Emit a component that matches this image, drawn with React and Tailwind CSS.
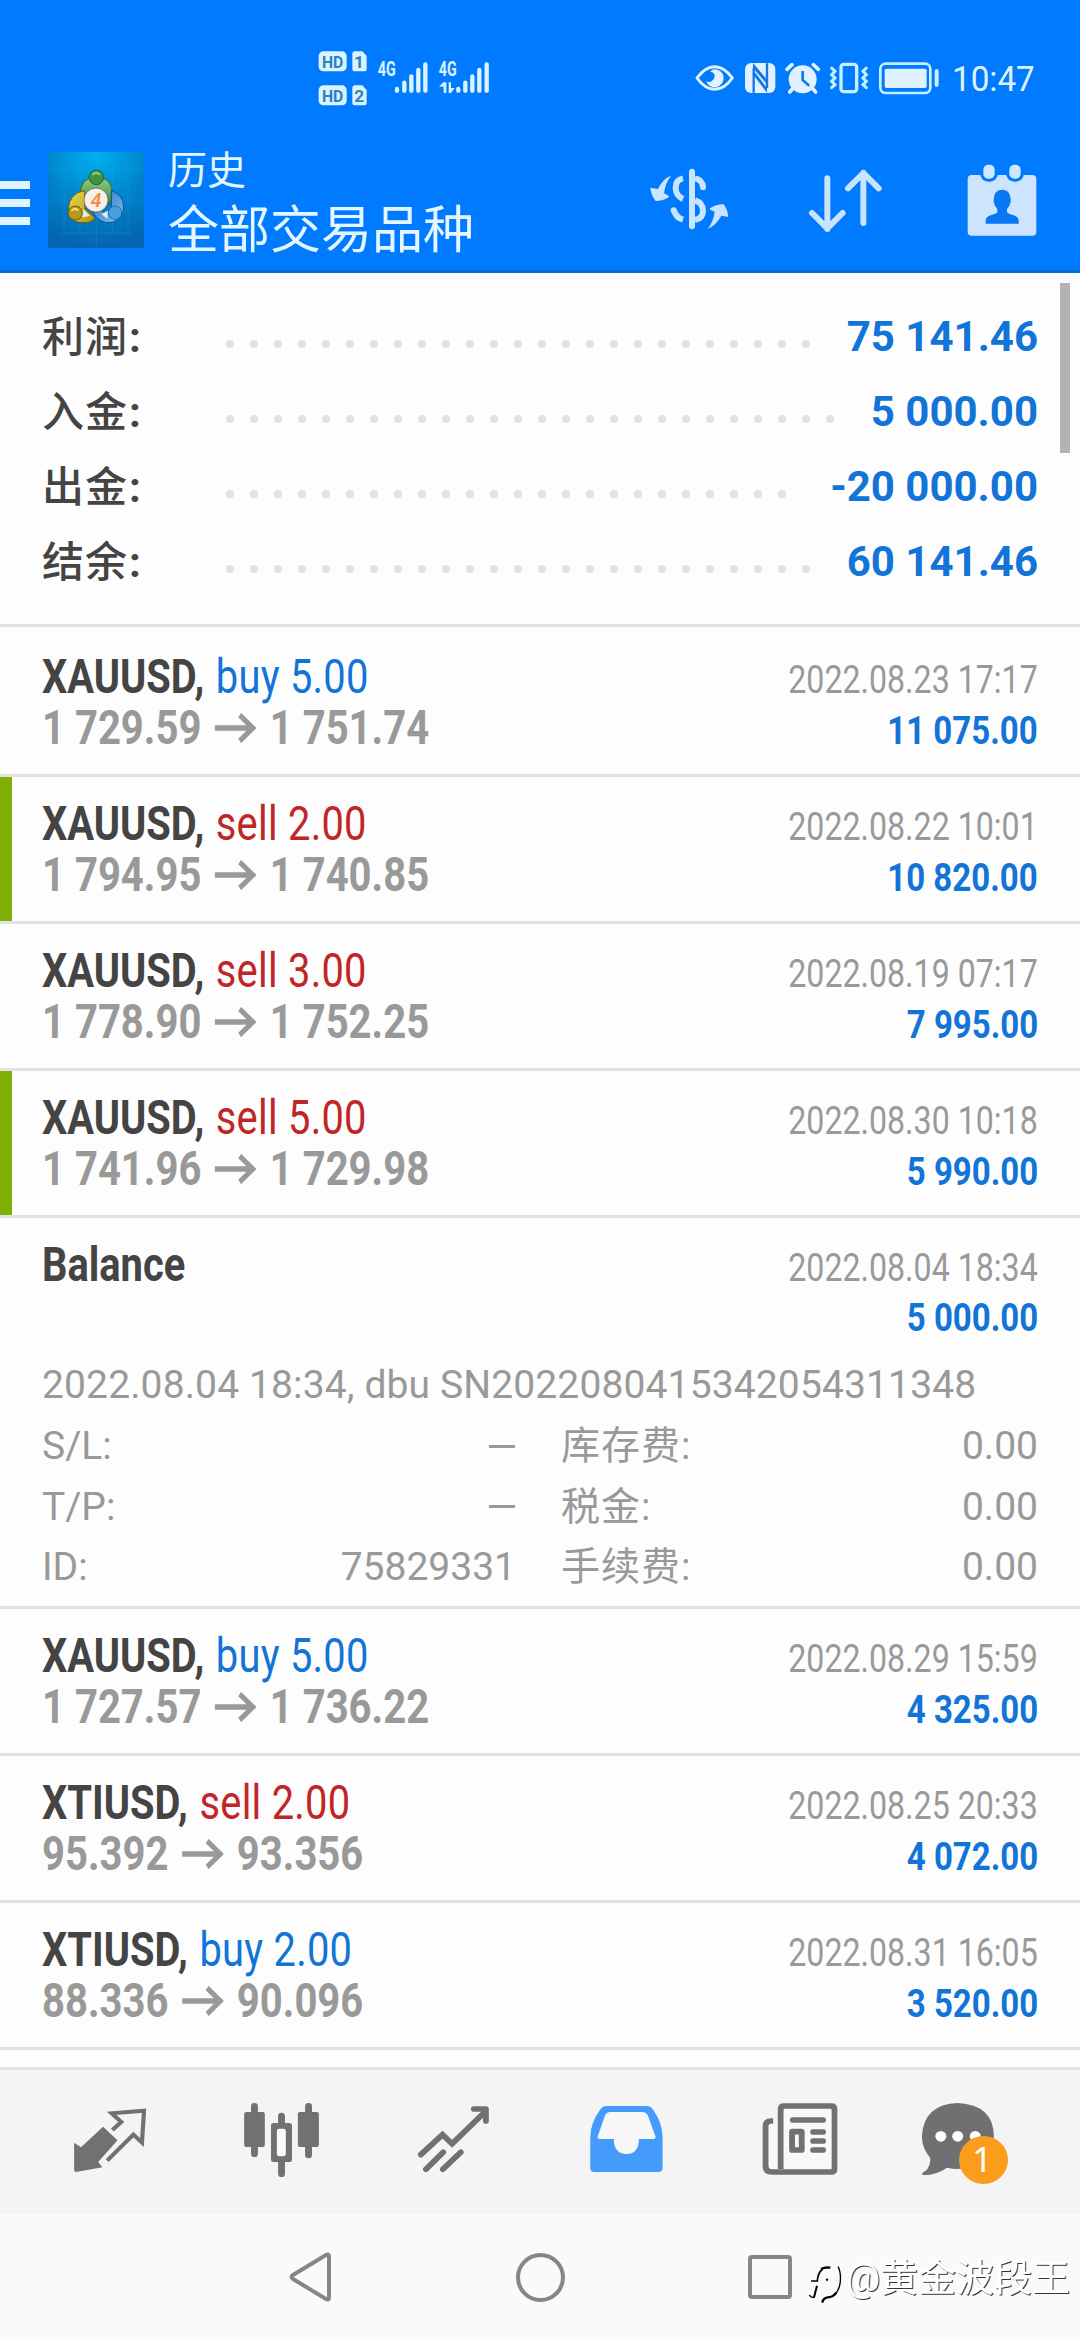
import React from "react";

const summary = [
  { label: "利润", value: "75 141.46", dots: 25 },
  { label: "入金", value: "5 000.00", dots: 26 },
  { label: "出金", value: "-20 000.00", dots: 24 },
  { label: "结余", value: "60 141.46", dots: 25 },
];

const deals = [
  { symbol: "XAUUSD", side: "buy", volume: "5.00", open: "1 729.59", close: "1 751.74", time: "2022.08.23 17:17", profit: "11 075.00" },
  { symbol: "XAUUSD", side: "sell", volume: "2.00", open: "1 794.95", close: "1 740.85", time: "2022.08.22 10:01", profit: "10 820.00", marked: true },
  { symbol: "XAUUSD", side: "sell", volume: "3.00", open: "1 778.90", close: "1 752.25", time: "2022.08.19 07:17", profit: "7 995.00" },
  { symbol: "XAUUSD", side: "sell", volume: "5.00", open: "1 741.96", close: "1 729.98", time: "2022.08.30 10:18", profit: "5 990.00", marked: true },
];

const laterDeals = [
  { symbol: "XAUUSD", side: "buy", volume: "5.00", open: "1 727.57", close: "1 736.22", time: "2022.08.29 15:59", profit: "4 325.00" },
  { symbol: "XTIUSD", side: "sell", volume: "2.00", open: "95.392", close: "93.356", time: "2022.08.25 20:33", profit: "4 072.00" },
  { symbol: "XTIUSD", side: "buy", volume: "2.00", open: "88.336", close: "90.096", time: "2022.08.31 16:05", profit: "3 520.00" },
];

const details = [
  { left: "S/L:", leftValue: null, right: "库存费:" },
  { left: "T/P:", leftValue: null, right: "税金:" },
  { left: "ID:", leftValue: "75829331", right: "手续费:" },
];

const SignalIcons = () => (
  <svg width="180" height="60" viewBox="50 55 540 180" fill="#d9f3ff">
    <rect x="55" y="65" width="84" height="60" rx="14" />
    <rect x="55" y="167" width="84" height="60" rx="14" />
    <path d="M164 65h22l13 14v38q0 8-8 8h-27q-8 0-8-8v-44q0-8 8-8z" />
    <path d="M164 167h22l13 14v38q0 8-8 8h-27q-8 0-8-8v-44q0-8 8-8z" />
    <g fill="#2f7fc4" fontFamily="Roboto, sans-serif" fontWeight="700" fontSize="52" textAnchor="middle">
      <text x="97" y="114" textLength="64" lengthAdjust="spacingAndGlyphs">HD</text>
      <text x="97" y="216" textLength="64" lengthAdjust="spacingAndGlyphs">HD</text>
      <text x="176" y="114">1</text>
      <text x="177" y="216">2</text>
    </g>
    <g fontFamily="Roboto, sans-serif" fontWeight="700" fontSize="58">
      <text x="232" y="139" textLength="54" lengthAdjust="spacingAndGlyphs">4G</text>
      <text x="415" y="139" textLength="54" lengthAdjust="spacingAndGlyphs">4G</text>
    </g>
    <g stroke="#d9f3ff" strokeWidth="13" strokeLinecap="round">
      <path d="M290 178v5M312 159v24M333 140v43M354 121v62M375 104v79" />
      <path d="M474 178v5M495 159v24M516 140v43M537 121v62M559 104v79" />
    </g>
    <path d="M430 158v32h8v-32zM416 172l14-16v14zM445 158h7v32h-7zM452 190l11-15h-11z" />
  </svg>
);

const StatusIcons = () => (
  <svg width="250" height="36" viewBox="40 60 750 108" fill="#e0f2ff">
    <path d="M52 114q24-34 53-34t53 34q-24 34-53 34t-53-34z" fill="none" stroke="#e0f2ff" strokeWidth="9" strokeLinejoin="round" />
    <path d="M102 88a27 27 0 1 1-23 34q8 7 17 1q12-9 8-20q-3-8-12-8q4-5 10-7z" />
    <rect x="196" y="69" width="91" height="90" rx="18" />
    <path d="M222 158V84M262 70v74" fill="none" stroke="#1476e6" strokeWidth="7" />
    <path d="M220 69l42 50v14L220 84z" fill="#1476e6" />
    <path d="M222 92l40 52v14L222 106z" fill="#1476e6" />
    <circle cx="369" cy="118" r="42" />
    <path d="M322 88l15-14M416 88l-15-14M338 147l-8 9M400 147l8 9" stroke="#e0f2ff" strokeWidth="11" strokeLinecap="round" />
    <path d="M369 96v24l17 15" fill="none" stroke="#1476e6" strokeWidth="8" strokeLinecap="round" />
    <rect x="484" y="73" width="47" height="82" rx="8" fill="none" stroke="#c4f1ff" strokeWidth="10" />
    <path d="M456 84l10 10-10 10 10 10-10 10 10 10-10 9M560 84l-10 10 10 10-10 10 10 10-10 10 10 9" fill="none" stroke="#c4f1ff" strokeWidth="9" strokeLinecap="round" />
    <rect x="602" y="71" width="150" height="88" rx="16" fill="none" stroke="#c4f1ff" strokeWidth="8" />
    <rect x="615" y="86" width="126" height="58" rx="5" />
    <path d="M771 93v42" stroke="#c4f1ff" strokeWidth="12" strokeLinecap="round" />
  </svg>
);

const AppLogo = () => (
  <svg className="ml-[18px]" width="96" height="96" viewBox="0 0 288 288">
    <defs>
      <radialGradient id="logoBg" cx="0.5" cy="0" r="1">
        <stop offset="0" stopColor="#00b2f2" />
        <stop offset="0.55" stopColor="#0083cb" />
        <stop offset="1" stopColor="#0564b0" />
      </radialGradient>
      <linearGradient id="logoGreen" x1="0" y1="0" x2="0" y2="1">
        <stop offset="0" stopColor="#9dcf80" />
        <stop offset="1" stopColor="#2f8c3a" />
      </linearGradient>
      <linearGradient id="logoGold" x1="0" y1="0" x2="1" y2="1">
        <stop offset="0" stopColor="#ecd85a" />
        <stop offset="1" stopColor="#b29413" />
      </linearGradient>
      <linearGradient id="logoBlue" x1="0" y1="0" x2="1" y2="1">
        <stop offset="0" stopColor="#1b6ec4" />
        <stop offset="1" stopColor="#83c5f3" />
      </linearGradient>
    </defs>
    <rect width="288" height="288" fill="url(#logoBg)" />
    <path d="M0 53h288M0 150h288M48 243h200M48 30v220M96 30v220M145 0v288M193 30v220M240 30v220" stroke="#35b4e5" strokeWidth="2" opacity="0.3" />
    <path d="M96 130q0-55 49-55t49 55q0 20-12 28l-20-35q-17-14-34 0z" fill="url(#logoGreen)" stroke="#1f6530" strokeWidth="3" />
    <path d="M190 115q37 15 37 50t-34 46q-38 8-60-32l22-8q18 20 35 8z" fill="url(#logoBlue)" stroke="#104f92" strokeWidth="3" />
    <path d="M110 116q-48 6-49 60q2 40 55 36q18-2 25-15l-30-26z" fill="url(#logoGold)" stroke="#6e5f0a" strokeWidth="3" />
    <path d="M106 172l20 20-24 4zM160 186l20-10-2 24z" fill="#e9eee4" />
    <circle cx="145" cy="76" r="22" fill="#3d9447" stroke="#1f6530" strokeWidth="3" />
    <circle cx="82" cy="183" r="21" fill="#b39a1b" stroke="#6e5f0a" strokeWidth="3" />
    <circle cx="201" cy="182" r="20" fill="#4b9fe0" stroke="#1b69b0" strokeWidth="3" />
    <path d="M135 67q8-8 19-1" stroke="#8fd08c" strokeWidth="6" fill="none" strokeLinecap="round" />
    <path d="M72 175q8-8 17-1" stroke="#efdf74" strokeWidth="6" fill="none" strokeLinecap="round" />
    <circle cx="144" cy="144" r="36" fill="#f4f1ed" stroke="#5e5030" strokeWidth="2" />
    <text x="144" y="165" textAnchor="middle" fontFamily="Roboto, sans-serif" fontStyle="italic" fontWeight="500" fontSize="60" fill="#f58a3c">4</text>
  </svg>
);

const CurrencyIcon = () => (
  <svg width="80" height="66" viewBox="90 78 240 198" fill="#c8e4ff">
    <path d="M157 107q-26 8-40 40l-23-4q2 23 16 40q22 0 41-13q-3-5-16-10q4-33 22-53z" />
    <path d="M265 267q26-10 42-40l21 4q-2-24-15-39q-23 1-42 14q4 5 16 9q-4 32-22 52z" />
    <path d="M219 95v164" stroke="#c8e4ff" strokeWidth="18" strokeLinecap="round" />
    <path d="M192 115q-22 4-22 29q0 22 22 33M165 212q6 21 27 27" fill="none" stroke="#c8e4ff" strokeWidth="18" strokeLinecap="butt" />
    <circle cx="164" cy="211" r="9" />
    <path d="M228 115q22 4 24 26M228 181q24 8 24 31q0 23-24 28" fill="none" stroke="#c8e4ff" strokeWidth="18" />
    <circle cx="252" cy="142" r="9" />
  </svg>
);

const SortIcon = () => (
  <svg width="80" height="66" viewBox="560 80 240 198" fill="none" stroke="#c8e4ff" strokeWidth="18" strokeLinecap="round" strokeLinejoin="round">
    <path d="M624 114v152M578 218l46 46 46-46M732 248V97M686 144l46-46 46 46" />
  </svg>
);

const CalendarIcon = () => (
  <svg width="75" height="75" viewBox="1035 65 225 225">
    <rect x="1043" y="104" width="206" height="182" rx="12" fill="#cce4fd" />
    <rect x="1080" y="62" width="54" height="62" rx="25" fill="#007aff" />
    <rect x="1158" y="62" width="54" height="62" rx="25" fill="#007aff" />
    <rect x="1090" y="73" width="34" height="42" rx="15" fill="#cce9ff" />
    <rect x="1168" y="73" width="34" height="42" rx="15" fill="#cce9ff" />
    <path d="M1146 148q-26 0-25 37q3 14 11 21v10q-4 5-20 9q-14 4-15 15v10h99v-10q-1-11-15-15q-17-4-20-9v-10q8-8 11-21q1-37-26-37z" fill="#0877f2" />
  </svg>
);

const tabSvg = { width: 100, height: 90, preserveAspectRatio: "none" };

const QuotesIcon = () => (
  <svg {...tabSvg} viewBox="174 201 290.4 270" fill="#717171">
    <path d="M299 290l42 41-56 65 12 16-76 14q-6 0-6-6v-82l20 14z" />
    <path d="M326 300l26-24-28-26 94-8-6 96-25-24-76 78" fill="none" stroke="#717171" strokeWidth="12" />
  </svg>
);

const ChartIcon = () => (
  <svg {...tabSvg} viewBox="673.7 201 290.4 270" fill="#717171">
    <rect x="709" y="246" width="60" height="105" rx="6" />
    <rect x="865" y="246" width="61" height="105" rx="6" />
    <path d="M739 229v142M896 229v146M817.500 258v30M817.500 390v41" stroke="#717171" strokeWidth="20" strokeLinecap="round" />
    <rect x="787" y="279" width="61" height="117" rx="7" />
    <rect x="804" y="296" width="26" height="83" rx="7" fill="#fafafa" />
  </svg>
);

const TradeIcon = () => (
  <svg {...tabSvg} viewBox="1173.2 201 290.4 270" fill="none" stroke="#717171" strokeWidth="17" strokeLinecap="round">
    <path d="M1222 374l63-60 28 27 92-92" strokeLinejoin="miter" />
    <path d="M1376 237h35v36" strokeLinejoin="round" />
    <path d="M1237 418l50-51M1286 418l52-51" />
  </svg>
);

const HistoryIcon = () => (
  <svg {...tabSvg} viewBox="104.5 201 290.4 270">
    <path d="M193 228h117q12 0 19 12q27 40 27 82v92q0 12-12 12H158q-12 0-12-12v-92q0-42 28-82q7-12 19-12z" fill="#449bfb" />
    <path d="M205 246h91q12 0 17 10l22 62q2 9-6 9h-42q0 45-36 45t-37-45h-41q-8 0-5-9l21-62q5-10 16-10z" fill="#f7f7f8" />
  </svg>
);

const NewsIcon = () => (
  <svg {...tabSvg} viewBox="604 201 290.4 270" fill="none" stroke="#717171" strokeWidth="17">
    <path d="M664 274h13v152h-13zM677 282h14v135h-14z" fill="#f8f8f8" stroke="none" />
    <path d="M677 273h-6q-16 0-16 16v118q0 19 19 19h172q9 0 9-9V237q0-9-9-9H708q-9 0-9 9v180" />
    <rect x="708" y="237" width="138" height="180" rx="8" fill="#f8f8f8" stroke="none" />
    <path d="M734 270h88M793 306h29M793 333h29M793 360h29" strokeLinecap="round" />
    <rect x="732" y="305" width="28" height="55" rx="1" />
  </svg>
);

const ChatIcon = () => (
  <svg {...tabSvg} viewBox="1103.5 201 290.4 270">
    <path d="M1213 219q105 6 105 100q-5 96-105 98q-16 0-31-4q-34 24-71 22q-5-5 8-12q16-14 14-40q-24-27-24-64q5-96 104-100z" fill="#707070" />
    <circle cx="1164" cy="319" r="16" fill="#fff" />
    <circle cx="1213" cy="319" r="16" fill="#fff" />
    <circle cx="1264" cy="319" r="16" fill="#fff" />
    <ellipse cx="1288" cy="390" rx="71" ry="72" fill="#fc9c1c" />
    <text x="1284" y="426" textAnchor="middle" fontFamily="Noto Sans, sans-serif" fontSize="104" fill="#fff">1</text>
  </svg>
);

const Arrow = () => (
  <svg className="mx-[16px] inline-block align-[1px]" width="50" height="30" viewBox="0 0 50 30" preserveAspectRatio="none" fill="none" stroke="#999" strokeWidth="5.500">
    <path d="M0 15h46M30 2l16 13-16 13" />
  </svg>
);

const DealRow = ({ deal }) => (
  <div className="relative h-[147px] border-b-[3px] border-[#e2e2e2] pt-[21px] pr-[42px] pl-[42px]">
    {deal.marked && <div className="absolute top-0 left-0 h-full w-3 bg-[#7fb006]" />}
    <div className="flex h-[51px] items-baseline justify-between">
      <div className="origin-left scale-x-[0.83] text-[48px] leading-[51px] font-bold text-[#444]">
        {deal.symbol},{" "}
        <span className={deal.side === "buy" ? "ml-[2px] font-normal tracking-[0.3px] text-[#1274d6]" : "ml-[2px] font-normal tracking-[0.3px] text-[#c02626]"}>
          {deal.side} {deal.volume}
        </span>
      </div>
      <div className="origin-right scale-x-[0.824] text-[39px] leading-[51px] text-[#999]">{deal.time}</div>
    </div>
    <div className="flex h-[51px] items-baseline justify-between">
      <div className="origin-left scale-x-[0.834] text-[48px] leading-[51px] font-bold text-[#999]">
        {deal.open}
        <Arrow />
        {deal.close}
      </div>
      <div className="origin-right scale-x-[0.847] text-[39px] leading-[51px] font-bold text-[#1274d6]">{deal.profit}</div>
    </div>
  </div>
);

const BalanceRow = () => (
  <div className="h-[391px] border-b-[3px] border-[#e2e2e2] px-[42px] pt-[21px]">
    <div className="flex h-[51px] items-baseline justify-between">
      <div className="origin-left scale-x-[0.83] text-[48px] leading-[51px] font-bold text-[#444]">Balance</div>
      <div className="origin-right scale-x-[0.824] text-[39px] leading-[51px] text-[#999]">2022.08.04 18:34</div>
    </div>
    <div className="flex h-[51px] justify-end pt-[3px]">
      <div className="origin-right scale-x-[0.847] text-[39px] leading-[51px] font-bold text-[#1274d6]">5 000.00</div>
    </div>
    <div className="mt-[14px] text-[39px] leading-[60px] text-[#999]">
      <div className="mb-px tracking-[0.13px]">2022.08.04 18:34, dbu SN2022080415342054311348</div>
      {details.map((item) => (
        <div key={item.left} className="flex h-[60.500px] items-center">
          <div className="flex w-[474px] items-center justify-between">
            <span>{item.left}</span>
            {item.leftValue ? <span>{item.leftValue}</span> : <span className="mr-px h-[3px] w-[26px] bg-[#999]" />}
          </div>
          <div className="ml-[45px] flex flex-1 justify-between">
            <span className="tracking-[1px]">{item.right}</span>
            <span>0.00</span>
          </div>
        </div>
      ))}
    </div>
  </div>
);

export default function App() {
  return (
    <div className="relative flex h-[2340px] w-[1080px] flex-col overflow-hidden bg-[#fdfdfd] font-[Roboto,'Noto_Sans_CJK_SC',sans-serif]">
      <header className="h-[273px] border-b-[3px] border-[#0a6bcb] bg-[#007aff]">
        <div className="flex h-[130px] items-start pt-[48px]">
          <div className="ml-[317px]">
            <SignalIcons />
          </div>
          <div className="mt-[12px] ml-[196px]">
            <StatusIcons />
          </div>
          <div className="mt-[11px] ml-[9px] origin-left scale-x-[0.95] text-[35px] leading-[42px] text-[#dff2ff]">10:47</div>
        </div>
        <div className="flex h-[140px] items-start">
          <div className="mt-[51px] flex w-[30px] flex-col gap-[10px]">
            <div className="h-2 bg-[#def3ff]" />
            <div className="h-2 bg-[#def3ff]" />
            <div className="h-2 bg-[#def3ff]" />
          </div>
          <div className="mt-[22px]">
            <AppLogo />
          </div>
          <div className="ml-[24px] w-[481px] text-[#e4f6ff]">
            <div className="mt-[14px] text-[39px] leading-[54px]">历史</div>
            <div className="mt-[2px] text-[51px] leading-[62px]">全部交易品种</div>
          </div>
          <div className="mt-[36px]">
            <CurrencyIcon />
          </div>
          <div className="mt-[37px] ml-[77px]">
            <SortIcon />
          </div>
          <div className="mt-[32px] ml-[79px]">
            <CalendarIcon />
          </div>
        </div>
      </header>

      <main className="relative flex-1">
        <div className="absolute top-[10px] right-[10px] h-[170px] w-[10px] bg-[#b3b3b3]" />
        <section className="mb-[3px] h-[354px] border-b-[3px] border-[#e2e2e2] pt-[26px] pr-[42px] pl-[42px]">
          {summary.map((row) => (
            <div key={row.label} className="flex h-[75px] items-center text-[42px] leading-[73px] font-bold">
              <div className="w-[184px] pt-[2px] font-medium tracking-[1px] text-[#444]">
                {row.label}
                <span className="ml-px font-bold">:</span>
              </div>
              <div className="mt-[15px] flex flex-1 gap-4">
                {Array.from({ length: row.dots }, (_, i) => (
                  <div key={i} className="size-2 rounded-full bg-[#e2e2e2]" />
                ))}
              </div>
              <div className="text-[#1274d6]">{row.value}</div>
            </div>
          ))}
        </section>
        {deals.map((deal) => (
          <DealRow key={deal.time} deal={deal} />
        ))}
        <BalanceRow />
        {laterDeals.map((deal) => (
          <DealRow key={deal.time} deal={deal} />
        ))}
      </main>

      <nav className="flex h-[147px] items-center border-t-[3px] border-[#e2e2e2] bg-[#f4f4f4] px-6">
        {[QuotesIcon, ChartIcon, TradeIcon, HistoryIcon, NewsIcon, ChatIcon].map((Icon, i) => (
          <div key={i} className="flex flex-1 justify-center">
            <Icon />
          </div>
        ))}
      </nav>

      <footer className="relative h-[126px] bg-[#fafafa]">
        <div className="flex h-full items-center justify-center gap-[181px]">
          <svg width="48" height="50" viewBox="0 0 48 50" fill="none" stroke="#868686" strokeWidth="4" strokeLinejoin="round">
            <path d="M42 4.500q0-3-3-1.500L6 23q-3 2 0 4l33 20q3 1.500 3-1.500z" />
          </svg>
          <div className="size-[49px] rounded-full border-4 border-[#868686]" />
          <div className="flex w-[48px] justify-center">
            <div className="h-[44px] w-[44px] rounded-[4px] border-4 border-[#868686]" />
          </div>
        </div>
        <div className="absolute top-[41px] right-[10px] flex items-start text-white">
          <svg className="mt-[5px] mr-[3px]" width="37" height="45" viewBox="15 60 111 135" fill="none" stroke="#000">
            <path d="M48 137l-9 35" strokeWidth="6" />
            <path d="M41 173q-12 0-16-8" strokeWidth="4" />
            <path d="M30 123h19q1-24 16-36" strokeWidth="5" />
            <path d="M60 87q12-6 28-4" strokeWidth="7" />
            <path d="M111 80q9 16 7 44-3 28-17 39" strokeWidth="4" />
            <path d="M106 158q-10 14-26 14-14 2-16 16" strokeWidth="7" />
            <circle cx="78" cy="119" r="3.500" fill="#000" stroke="none" />
          </svg>
          <span className="text-[38px] leading-[46px] [text-shadow:1px_1px_0px_#333]">@黄金波段王</span>
        </div>
      </footer>
    </div>
  );
}
